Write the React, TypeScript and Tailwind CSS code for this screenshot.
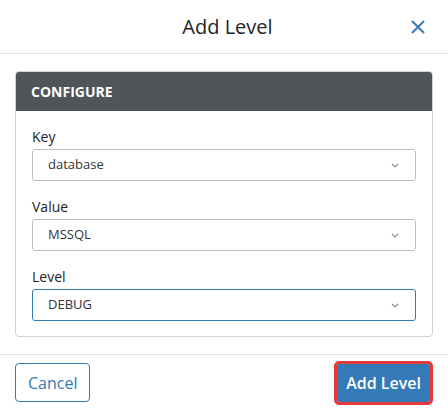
import React from "react";

function Chevron() {
  return (
    <svg width="8" height="5" viewBox="0 0 8 5" className="shrink-0">
      <path d="M1 1 L4 4 L7 1" fill="none" stroke="#8a8f94" strokeWidth="1.2" />
    </svg>
  );
}

function Select({ value, focused }: { value: string; focused?: boolean }) {
  return (
    <div
      className={
        "flex h-[32px] items-center justify-between rounded-[3px] border bg-white pl-[15px] pr-[16px] " +
        (focused ? "border-[#337ab7]" : "border-[#b9bdc1]")
      }
    >
      <span className="text-[13px] text-[#333333]">{value}</span>
      <Chevron />
    </div>
  );
}

function Field({ label, value, focused }: { label: string; value: string; focused?: boolean }) {
  return (
    <div className="flex flex-col">
      <label className="mb-[2px] text-[14px] leading-[21px] text-[#212529]">{label}</label>
      <Select value={value} focused={focused} />
    </div>
  );
}

export default function App() {
  return (
    <div
      className="flex h-[410px] w-[448px] flex-col bg-white"
      style={{ fontFamily: '"Open Sans", "Noto Sans", sans-serif' }}
    >
      <div className="flex h-[54px] shrink-0 items-center border-b border-[#dee2e6] pl-[15px] pr-[22px]">
        <div className="flex-1 pl-[30px] text-center text-[20px] text-[#212529]">Add Level</div>
        <svg width="16" height="16" viewBox="0 0 16 16" className="shrink-0">
          <path d="M2 2 L14 14 M14 2 L2 14" stroke="#3a7ab8" strokeWidth="2" />
        </svg>
      </div>
      <div className="px-[15px] pb-[17px] pt-[17px]">
        <div className="overflow-hidden rounded-[4px] border border-[#cfd3d6]">
          <div className="flex h-[39px] items-center bg-[#505559] px-[15px] text-[14px] font-bold text-white">
            CONFIGURE
          </div>
          <div className="flex flex-col gap-[15px] px-[16px] pb-[15px] pt-[15px]">
            <Field label="Key" value="database" />
            <Field label="Value" value="MSSQL" />
            <Field label="Level" value="DEBUG" focused />
          </div>
        </div>
      </div>
      <div className="flex flex-1 items-center justify-between border-t border-[#dee2e6] pl-[15px] pr-[18px]">
        <button className="h-[39px] rounded-[4px] border border-[#337ab7] px-[12px] text-[16px] text-[#337ab7]">
          Cancel
        </button>
        <button className="h-[38px] rounded-[2px] bg-[#337ab7] px-[9px] text-[16px] font-semibold text-white outline-[3px] outline-[#e53935] outline-solid">
          Add Level
        </button>
      </div>
    </div>
  );
}
